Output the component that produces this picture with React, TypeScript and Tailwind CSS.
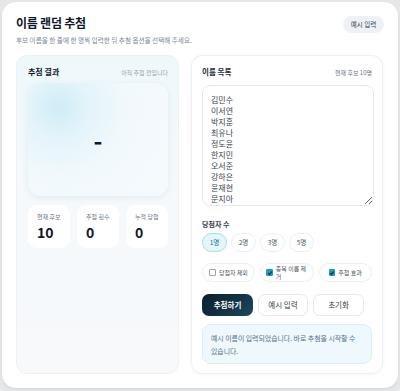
import React from "react";

const names = ["김민수", "이서연", "박지훈", "최유나", "정도윤", "한지민", "오서준", "강하은", "윤재현", "문지아"];

function Check({ on }: { on: boolean }) {
  if (!on) {
    return <span className="w-[6.5px] h-[6.5px] shrink-0 rounded-[1px] border border-[#9aa3ae] bg-white" />;
  }
  return (
    <span className="w-[6.5px] h-[6.5px] shrink-0 rounded-[1px] bg-[#1c9cc2] flex items-center justify-center">
      <svg viewBox="0 0 10 10" className="w-[6px] h-[6px]">
        <path d="M2 5.2 L4.2 7.4 L8.2 2.6" fill="none" stroke="#0b2a3a" strokeWidth="1.8" />
      </svg>
    </span>
  );
}

export default function App() {
  return (
    <div className="w-[400px] h-[391px] bg-[#e6e7e9] p-[2px] font-['Noto_Sans_CJK_KR','Noto_Sans',sans-serif]">
      <div className="w-[396px] h-[386px] rounded-[14px] bg-white px-[14px] pt-[12px] shadow-[0_1px_3px_rgba(0,0,0,0.08)]">
        <div className="flex justify-between items-start">
          <div>
            <div className="text-[12px] leading-[18px] font-bold text-[#111827] tracking-[-0.02em]">이름 랜덤 추첨</div>
            <div className="mt-[3px] text-[6.6px] leading-[10px] text-[#7d8796]">후보 이름을 한 줄에 한 명씩 입력한 뒤 추첨 옵션을 선택해 주세요.</div>
          </div>
          <div className="mt-[2px] h-[17px] w-[41px] rounded-full bg-[#eef1f6] text-[6.5px] text-[#374151] flex items-center justify-center">예시 입력</div>
        </div>

        <div className="mt-[10px] flex gap-[12px]">
          {/* left panel */}
          <div className="w-[163px] h-[319px] rounded-[11px] border border-[#eef0f3] bg-[linear-gradient(180deg,#eef8fb_0%,#f5f9fb_40%,#f7f9fb_100%)] pl-[11px] pr-[10px] pt-[10px]">
            <div className="flex justify-between items-center h-[12px]">
              <span className="text-[8px] font-bold text-[#111827]">추첨 결과</span>
              <span className="text-[6px] text-[#9aa3ae]">아직 추첨 전입니다</span>
            </div>
            <div className="mt-[5px] h-[113px] rounded-[13px] bg-[radial-gradient(circle_at_22%_22%,#cfecf6_0%,#e4f4fa_22%,#f2f9fc_50%,#f5fafd_100%)] shadow-[0_2px_6px_rgba(120,160,180,0.15)] flex items-center justify-center">
              <span className="text-[24px] leading-none font-bold text-[#111827]">-</span>
            </div>
            <div className="mt-[9px] grid grid-cols-3 gap-[7px]">
              {[
                ["현재 후보", "10"],
                ["추첨 횟수", "0"],
                ["누적 당첨", "0"],
              ].map(([l, v]) => (
                <div key={l} className="h-[43px] rounded-[9px] bg-white pl-[9px] pt-[8px]">
                  <div className="text-[6px] leading-[8px] text-[#6b7280]">{l}</div>
                  <div className="mt-[3px] text-[14px] leading-[16px] font-bold text-[#111827]">{v}</div>
                </div>
              ))}
            </div>
          </div>

          {/* right panel */}
          <div className="w-[192px] h-[319px] rounded-[11px] border border-[#eef0f3] bg-white shadow-[0_1px_4px_rgba(0,0,0,0.04)] px-[10px] pt-[10px]">
            <div className="flex justify-between items-center h-[12px]">
              <span className="text-[7.5px] font-semibold text-[#1f2937]">이름 목록</span>
              <span className="text-[6px] text-[#6b7280]">현재 후보 10명</span>
            </div>
            <textarea
              readOnly
              defaultValue={names.join("\n")}
              className="mt-[7px] block w-[172px] h-[121px] rounded-[8px] border border-[#e5e7eb] bg-white pl-[8px] pt-[8px] text-[8px] leading-[11px] text-[#3b4350] outline-none resize-y overflow-hidden"
            />
            <div className="mt-[13px] text-[7px] leading-[10px] font-semibold text-[#374151]">당첨자 수</div>
            <div className="mt-[4px] flex gap-[4px]">
              {["1명", "2명", "3명", "5명"].map((n, i) => (
                <div
                  key={n}
                  className={
                    i === 0
                      ? "w-[25px] h-[19px] rounded-full border border-[#a8dcea] bg-[#e5f6fb] text-[6.5px] text-[#0e6e8a] flex items-center justify-center"
                      : "w-[25px] h-[19px] rounded-full border border-[#eceef1] bg-white text-[6.5px] text-[#4b5563] flex items-center justify-center"
                  }
                >
                  {n}
                </div>
              ))}
            </div>
            <div className="mt-[11px] grid grid-cols-3 gap-[5px]">
              {[
                ["당첨자 제외", false],
                ["중복 이름 제거", true],
                ["추첨 효과", true],
              ].map(([t, on]) => (
                <div key={t as string} className="h-[19px] rounded-full border border-[#eceef1] bg-white px-[5px] flex items-center justify-center gap-[3px]">
                  <Check on={on as boolean} />
                  <span className="text-[6px] leading-[8px] text-[#4b5563] max-w-[34px]">{t as string}</span>
                </div>
              ))}
            </div>
            <div className="mt-[12px] flex gap-[5px]">
              <div className="w-[51px] h-[22px] rounded-[7px] bg-[linear-gradient(135deg,#0b1f2e_0%,#143447_60%,#1d4a60_100%)] text-white text-[7.5px] font-bold flex items-center justify-center">추첨하기</div>
              <div className="w-[50px] h-[22px] rounded-[7px] border border-[#e5e7eb] bg-white text-[#374151] text-[7.5px] flex items-center justify-center">예시 입력</div>
              <div className="w-[51px] h-[22px] rounded-[7px] border border-[#e5e7eb] bg-white text-[#374151] text-[7.5px] flex items-center justify-center">초기화</div>
            </div>
            <div className="mt-[8px] h-[40px] rounded-[9px] border border-[#d9eef6] bg-[#eef8fd] px-[8px] pt-[7px] text-[6.9px] leading-[13px] text-[#55708a] break-keep">
              예시 이름이 입력되었습니다. 바로 추첨을 시작할 수 있습니다.
            </div>
          </div>
        </div>
      </div>
    </div>
  );
}
